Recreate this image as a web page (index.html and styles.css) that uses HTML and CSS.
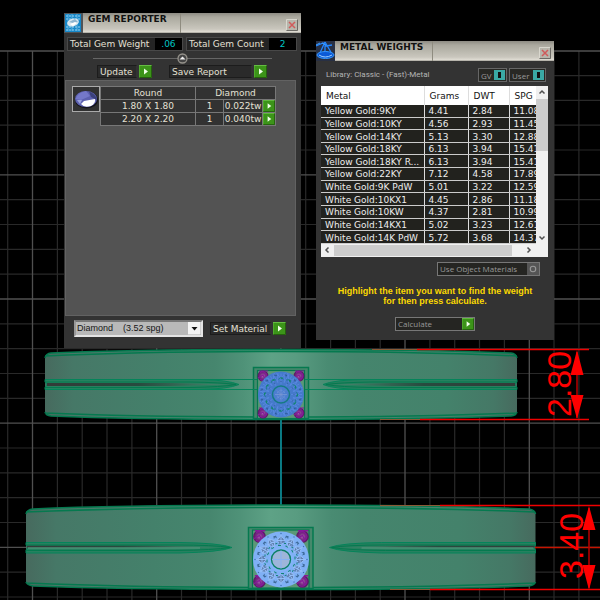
FILE: index.html
```html
<!DOCTYPE html>
<html lang="en">
<head>
<meta charset="utf-8">
<meta name="viewport" content="width=device-width, initial-scale=1">
<title>Gem Reporter and Metal Weights</title>
<link rel="stylesheet" href="styles.css">
</head>
<body>
<svg class="viewport" viewBox="0 0 600 600" preserveAspectRatio="xMinYMin slice" role="img" aria-label="Side view of two rings with dimensions">
  <defs>
    <linearGradient id="band">
      <stop offset="0" stop-color="#476a5e"/><stop offset=".06" stop-color="#467867"/><stop offset=".25" stop-color="#44816b"/>
      <stop offset=".36" stop-color="#46866e"/><stop offset=".42" stop-color="#4f9278"/><stop offset=".48" stop-color="#5ea286"/><stop offset=".53" stop-color="#599c81"/>
      <stop offset=".6" stop-color="#498b72"/><stop offset=".66" stop-color="#45856d"/><stop offset=".85" stop-color="#44826b"/><stop offset=".95" stop-color="#457866"/><stop offset="1" stop-color="#476a5e"/>
    </linearGradient>
    <linearGradient id="groove">
      <stop offset="0" stop-color="#343a38"/><stop offset=".5" stop-color="#284b3f"/><stop offset="1" stop-color="#468a70"/>
    </linearGradient>
    <radialGradient id="prong">
      <stop offset="0" stop-color="#b06ab4"/><stop offset=".45" stop-color="#7d3188"/><stop offset="1" stop-color="#551660"/>
    </radialGradient>
    <g id="groove1">
      <path d="M45 379.500H200Q228 380 239 384.500Q228 389 200 389.500H45V387.500L47 384.500L45 382Z" fill="#27805f" stroke="#05845a"/>
      <path d="M47 383H170L230 384.500L170 386H47Z" fill="url(#groove)"/>
      <path d="M45 382H190Q222 382.500 236 384.500Q222 387 190 387.500H45" fill="none" stroke="#05794f"/>
    </g>
    <g id="groove2">
      <path d="M26 542.500H180Q220 543 232 547.500Q220 552 180 553H26V550L28 547.500L26 545Z" fill="#27805f" stroke="#05845a"/>
      <path d="M27 545.500H150L220 547.500H27Z" fill="url(#groove)"/>
      <path d="M28 548H200" stroke="#5b9a82"/>
      <path d="M26 545H176Q214 545 230 547.500Q214 550 176 550.500H26" fill="none" stroke="#05794f"/>
    </g>
    <g id="facetDark">
      <path d="M0-10V-21M-3-12L-8-20M3-12L8-20M0-16L5-22M0-16L-5-22" stroke="#5b8ae4" stroke-width=".7" fill="none"/>
      <path d="M-3-15l3-2 3 2" stroke="#167b83" stroke-width=".7" fill="none"/>
      <circle cx="-5" cy="-19" r=".8" fill="#2f5795"/><circle cx="4" cy="-20" r=".7" fill="#3565a8"/><circle cx="0" cy="-13" r=".6" fill="#2f5d9d"/>
      <path d="M-1-17h3l-1 2z" fill="#11866b"/>
    </g>
    <g id="facetLight">
      <path d="M0-14l-4-5 4-5 4 5z" fill="#617fae"/>
      <path d="M0-14V-25M-4-19H4M0-24l-4 5 4 5 4-5z" stroke="#92bdf8" stroke-width="1" fill="none"/>
      <path d="M-7-23l2-1 1 3zM7-23l-2-1-1 3z" fill="#3e6b99"/>
      <path d="M-8-17l2-1 1 3zM5-14l2-2 1 2z" fill="#5a7fb0"/>
      <path d="M-3-14h3M3-16h2" stroke="#118576" stroke-width="1"/>
      <circle cx="0" cy="-26" r=".7" fill="#3d6fae"/>
    </g>
    <g id="claw">
      <circle r="5.500" fill="url(#prong)"/><path d="M-3-3A4 4 0 1 1-3 3M-5 2L0-1L2 3M-4-5H5" fill="none" stroke="#861a9a" stroke-width="1.100"/>
    </g>
  </defs>

  <rect width="600" height="600" fill="#000"/>
  <path stroke="#292929" stroke-width="1.200" fill="none" d="M0 75.600H600M0 100.400H600M0 125.200H600M0 150H600M0 199.700H600M0 224.500H600M0 249.300H600M0 274.200H600M0 323.800H600M0 348.700H600M0 373.500H600M0 398.300H600M0 448H600M0 472.800H600M0 497.600H600M0 522.500H600M0 572.100H600M0 597H600M7.700 51V600M57.400 51V600M82.200 51V600M107 51V600M131.900 51V600M181.500 51V600M206.400 51V600M231.200 51V600M256 51V600M305.700 51V600M330.600 51V600M355.400 51V600M380.200 51V600M429.900 51V600M454.700 51V600M479.500 51V600M504.400 51V600M554 51V600M578.900 51V600"/>
  <path stroke="#505050" stroke-width="1.300" fill="none" d="M0 51H600M0 174.800H600M0 299H600M0 423.200H600M0 547.300H600M32.500 51V600M156.700 51V600M280.900 51V600M405 51V600M529.300 51V600"/>
  <path d="M281 419V506" stroke="#008b97" stroke-width="1.600"/>

  <path d="M45 358Q46 353.500 51 353C110 350.500 200 349.500 281 349.500S450 350.500 511 353Q516 353.500 517 358V412Q516 415.500 511 416C450 418.500 360 419.500 281 419.500S110 418.500 51 416Q46 415.500 45 412Z" fill="url(#band)"/>
  <path d="M45 358Q46 353.500 51 353C110 350.500 200 349.500 281 349.500S450 350.500 511 353Q516 353.500 517 358M45 356C110 353 200 351.500 281 351.500S450 353 517 356M45 412Q46 415.500 51 416C110 418.500 200 419.500 281 419.500S450 418.500 511 416Q516 415.500 517 412M45 413C110 416 200 417 281 417S450 416 517 413" fill="none" stroke="#05794f" stroke-width="1.500"/>
  <path d="M200 379.500H360M200 389.500H360" stroke="#05845a"/>
  <use href="#groove1"/><use href="#groove1" transform="translate(562 0) scale(-1 1)"/>
  <rect x="253.500" y="367.500" width="55" height="51" fill="#46896c" stroke="#05794f" stroke-width="1.500"/>
  <rect x="257.500" y="370.500" width="47" height="48" fill="#5b9878" stroke="#05794f" stroke-width="1.200"/>
  <path d="M253 379.500H257M253 389.500H257M305 379.500H309M305 389.500H309" stroke="#05845a"/>
  <use href="#claw" x="263" y="376"/><use href="#claw" x="299" y="376"/><use href="#claw" x="263" y="413"/><use href="#claw" x="299" y="413"/>
  <g transform="translate(281 394.500)">
    <circle r="23" fill="#457acb"/>
    <use href="#facetDark"/><use href="#facetDark" transform="rotate(30)"/><use href="#facetDark" transform="rotate(60)"/><use href="#facetDark" transform="rotate(90)"/><use href="#facetDark" transform="rotate(120)"/><use href="#facetDark" transform="rotate(150)"/><use href="#facetDark" transform="rotate(180)"/><use href="#facetDark" transform="rotate(210)"/><use href="#facetDark" transform="rotate(240)"/><use href="#facetDark" transform="rotate(270)"/><use href="#facetDark" transform="rotate(300)"/><use href="#facetDark" transform="rotate(330)"/>
    <circle r="8.500" fill="#4c7ed0" stroke="#167b83" stroke-width="1.500"/>
    <path d="M-6 0H6M0-6V6M-4-4L4 4M4-4L-4 4" stroke="#7795d2" stroke-width=".8"/><circle r="4" fill="none" stroke="#6d9ae0" stroke-dasharray="1 1"/>
  </g>

  <path d="M26 514Q27 509.500 33 509C100 506 190 505 281 505S460 506 529 509Q535 510 535.500 514V582Q535 585 529 586C460 588.500 370 589.500 281 589.500S100 588.500 33 586Q27 585 26 582Z" fill="url(#band)"/>
  <path d="M26 514Q27 509.500 33 509C100 506 190 505 281 505S460 506 529 509Q535 510 535.500 514M26 512C100 509 190 507.500 281 507.500S460 509 535 512M26 582Q27 585 33 586C100 588.500 190 589.500 281 589.500S460 588.500 529 586Q535 585 535.500 582M26 583C100 586 190 587.500 281 587.500S460 586 535 583" fill="none" stroke="#05794f" stroke-width="1.500"/>
  <use href="#groove2"/><use href="#groove2" transform="translate(561.500 0) scale(-1 1)"/>
  <rect x="248.500" y="527.500" width="64.500" height="61" fill="#46896c" stroke="#05794f" stroke-width="1.500"/>
  <rect x="252.500" y="530" width="56.500" height="58" fill="#5b9878" stroke="#05794f" stroke-width="1.200"/>
  <use href="#claw" transform="translate(259.500 536.500) scale(1.150)"/><use href="#claw" transform="translate(302.500 536.500) scale(1.150)"/><use href="#claw" transform="translate(259.500 581.500) scale(1.150)"/><use href="#claw" transform="translate(302.500 581.500) scale(1.150)"/>
  <g transform="translate(281 559.500)">
    <circle r="28" fill="#7fb0f5"/>
    <use href="#facetLight"/><use href="#facetLight" transform="rotate(30)"/><use href="#facetLight" transform="rotate(60)"/><use href="#facetLight" transform="rotate(90)"/><use href="#facetLight" transform="rotate(120)"/><use href="#facetLight" transform="rotate(150)"/><use href="#facetLight" transform="rotate(180)"/><use href="#facetLight" transform="rotate(210)"/><use href="#facetLight" transform="rotate(240)"/><use href="#facetLight" transform="rotate(270)"/><use href="#facetLight" transform="rotate(300)"/><use href="#facetLight" transform="rotate(330)"/>
    <circle r="12" fill="#83b4f8"/>
    <circle r="9.500" fill="#9eb5da" stroke="#0d8066" stroke-width="1.400"/>
    <path d="M-9 0H9M0-9V9" stroke="#87b1f2"/>
  </g>

  <g fill="none">
    <path d="M372 349.500H417M380 419.500H420M380 505.500H440M390 589.500H430" stroke="#8a5a35"/>
    <path d="M417 349.500H589M420 419.500H589M440 505.500H600M430 589.500H600" stroke="#f00000" stroke-width="1.500"/>
    <path d="M535 547.500H600" stroke="#c81400" stroke-width="1.500"/>
    <path d="M577 352V418M589 508V588" stroke="#b80000" stroke-width="1.500"/>
  </g>
  <path fill="#f00" d="M577 350L583.500 375H570.500ZM577 419L583.500 395H570.500ZM589 506L595.500 530H582.500ZM589 590L595.500 565H582.500Z"/>
  <g class="dimension">
    <text transform="translate(571 417) rotate(-90)">2.80</text>
    <text transform="translate(583 579) rotate(-90)">3.40</text>
  </g>

  <symbol id="play" viewBox="0 0 13 13">
    <path d="M0 0H13V13H0Z" fill="#3c9419"/><path d="M0 12.500V.5H13" fill="none" stroke="#65bd43"/><path d="M.5 12.500H12.500V.5" fill="none" stroke="#25600f"/><path d="M5 3.500L9 6.500L5 9.500Z" fill="#f0ffe8"/>
  </symbol>
  <symbol id="close" viewBox="0 0 12 12">
    <path d="M0 0H12V12H0Z" fill="#b7b5ab"/><path d="M.5 11.500V.5H11.500" fill="none" stroke="#d9d7ce"/><path d="M.5 11.500H11.500V.5" fill="none" stroke="#6c6a65"/><path d="M3 3L9 9M9 3L3 9" stroke="#d05a5a" stroke-width="1.500"/>
  </symbol>
</svg>

<main class="desktop">
  <section class="window gem-window" aria-label="Gem Reporter">
    <header class="titlebar">
      <svg class="app-icon" viewBox="0 0 19 20" aria-hidden="true">
        <rect width="19" height="20" fill="#505458"/><rect x="1" y="1" width="16" height="18" fill="#1687c8"/>
        <path d="M2 3H16M2 6H16M2 14H16M2 17H16" stroke="#9ad4f1" stroke-dasharray="2 1"/><path d="M4 1V18M8 1V18M13 1V18" stroke="#78c2e8" stroke-width=".7"/>
        <ellipse cx="9" cy="9.500" rx="6" ry="3.800" transform="rotate(-15 9 9.500)" fill="#d6e5ee"/><path d="M5 9L11 6L14 9L9 10Z" fill="#8eb5d0"/><path d="M6 11L11 9L13 10L9 13Z" fill="#fff"/>
      </svg>
      <h1>GEM REPORTER</h1>
      <button class="close" aria-label="Close"><svg><use href="#close"/></svg></button>
    </header>
    <div class="stats">
      <div class="stat weight"><label for="gem-weight">Total Gem Weight</label><output id="gem-weight">.06</output></div>
      <div class="stat count"><label for="gem-count">Total Gem Count</label><output id="gem-count">2</output></div>
    </div>
    <div class="divider">
      <button class="collapse" aria-label="Collapse"><svg viewBox="0 0 11 11"><circle cx="5.500" cy="5.500" r="4.500" fill="#444" stroke="#96938c" stroke-width="1.300"/><path d="M2.500 6.500L5.500 3.500L8.500 6.500Z" fill="#eee"/></svg></button>
    </div>
    <div class="actions">
      <button class="action update"><span>Update</span><svg><use href="#play"/></svg></button>
      <button class="action save"><span>Save Report</span><svg><use href="#play"/></svg></button>
    </div>
    <div class="report">
      <svg class="gem-picture" viewBox="0 0 28 26" role="img" aria-label="Round gem">
        <rect x=".5" y=".5" width="27" height="25" fill="#313131" stroke="#aaa"/>
        <ellipse cx="14.500" cy="14" rx="11.500" ry="8.500" fill="#15151c"/><ellipse cx="14" cy="13" rx="11" ry="8" fill="#5d61b0"/>
        <path d="M3.500 13Q6 6 14 5L18 10L9 14Z" fill="#7478c9"/><path d="M17 5.500Q24 8 25 14L19 11Z" fill="#3b407c"/>
        <path d="M9 18L12 15L23 13Q24 17 19 20Q12 22 9 18Z" fill="#fff"/><path d="M5 14L10 14L8 18Z" fill="#9aa1dc"/>
      </svg>
      <table class="gems">
        <colgroup><col class="g-size"><col class="g-qty"><col class="g-weight"><col class="g-go"></colgroup>
        <thead><tr><th>Round</th><th colspan="3">Diamond</th></tr></thead>
        <tbody>
          <tr><td>1.80 X 1.80</td><td>1</td><td>0.022tw</td><td class="go"><button aria-label="Show 1.80 gems"><svg><use href="#play"/></svg></button></td></tr>
          <tr><td>2.20 X 2.20</td><td>1</td><td>0.040tw</td><td class="go"><button aria-label="Show 2.20 gems"><svg><use href="#play"/></svg></button></td></tr>
        </tbody>
      </table>
    </div>
    <footer class="material">
      <div class="picker">
        <select aria-label="Material"><option>Diamond &nbsp;&nbsp; (3.52 spg)</option></select>
        <svg class="picker-arrow" viewBox="0 0 13 13" aria-hidden="true"><rect width="13" height="13" fill="#f4f4f4"/><path d="M13 0V13H0" fill="none" stroke="#aaa"/><path d="M3.500 5H9.500L6.500 8.500Z" fill="#111"/></svg>
      </div>
      <button class="action set"><span>Set Material</span><svg><use href="#play"/></svg></button>
    </footer>
  </section>

  <section class="window metal-window" aria-label="Metal Weights">
    <header class="titlebar">
      <svg class="app-icon" viewBox="0 0 19 20" aria-hidden="true">
        <rect width="19" height="20" fill="#283044"/><path d="M0 5L7 2L10 5L16 4M9 1L3 14M9 1L16 13M9 5V13" fill="none" stroke="#2386ff" stroke-width="1.300"/>
        <ellipse cx="9.500" cy="14" rx="8.500" ry="3.500" fill="#0b5ad7" stroke="#3598ff"/><path d="M3 14Q9 18 16 14" fill="none" stroke="#9dceff"/><path d="M0 4L4 2M6 2L10 4" stroke="#3f9cff"/>
      </svg>
      <h1>METAL WEIGHTS</h1>
      <button class="close" aria-label="Close"><svg><use href="#close"/></svg></button>
    </header>
    <div class="library">
      <p>Library: Classic - (Fast)-Metal</p>
      <button class="toggle gv" aria-pressed="true"><span>GV</span><i></i></button>
      <button class="toggle user" aria-pressed="true"><span>User</span><i></i></button>
    </div>
    <div class="metals">
      <div class="metals-view">
        <table>
          <colgroup><col class="m-name"><col class="m-grams"><col class="m-dwt"><col class="m-spg"></colgroup>
          <thead><tr><th>Metal</th><th>Grams</th><th>DWT</th><th>SPG</th></tr></thead>
          <tbody>
            <tr><td>Yellow Gold:9KY</td><td>4.41</td><td>2.84</td><td>11.08</td></tr>
            <tr><td>Yellow Gold:10KY</td><td>4.56</td><td>2.93</td><td>11.45</td></tr>
            <tr><td>Yellow Gold:14KY</td><td>5.13</td><td>3.30</td><td>12.88</td></tr>
            <tr><td>Yellow Gold:18KY</td><td>6.13</td><td>3.94</td><td>15.41</td></tr>
            <tr><td>Yellow Gold:18KY R...</td><td>6.13</td><td>3.94</td><td>15.41</td></tr>
            <tr><td>Yellow Gold:22KY</td><td>7.12</td><td>4.58</td><td>17.89</td></tr>
            <tr><td>White Gold:9K PdW</td><td>5.01</td><td>3.22</td><td>12.59</td></tr>
            <tr><td>White Gold:10KX1</td><td>4.45</td><td>2.86</td><td>11.18</td></tr>
            <tr><td>White Gold:10KW</td><td>4.37</td><td>2.81</td><td>10.99</td></tr>
            <tr><td>White Gold:14KX1</td><td>5.02</td><td>3.23</td><td>12.61</td></tr>
            <tr><td>White Gold:14K PdW</td><td>5.72</td><td>3.68</td><td>14.37</td></tr>
          </tbody>
        </table>
      </div>
      <div class="vscroll">
        <svg viewBox="0 0 12 12"><path d="M3.500 7.500L6 5L8.500 7.500"/></svg><div class="thumb"></div><svg class="end" viewBox="0 0 12 12"><path d="M3.500 4.500L6 7L8.500 4.500"/></svg>
      </div>
      <div class="hscroll">
        <svg viewBox="0 0 12 12"><path d="M7.500 3.500L5 6L7.500 8.500"/></svg><div class="thumb"></div><svg class="end" viewBox="0 0 12 12"><path d="M4.500 3.500L7 6L4.500 8.500"/></svg>
      </div>
    </div>
    <div class="calculate">
      <button class="framed object"><span>Use Object Materials</span><svg viewBox="0 0 11 11"><rect width="11" height="11" fill="#555"/><circle cx="5.500" cy="5.500" r="2.500" fill="none" stroke="#999"/></svg></button>
      <p>Highlight the item you want to find the weight<br>for then press calculate.</p>
      <button class="framed run"><span>Calculate</span><svg><use href="#play"/></svg></button>
    </div>
  </section>
</main>
</body>
</html>
```
FILE: styles.css
```css
* { box-sizing: border-box; }

body {
  margin: 0;
  min-height: 100vh;
  background: #000;
  overflow: hidden;
  font-family: "DejaVu Sans", sans-serif;
  font-size: 9px;
  line-height: 12px;
  color: #e4e0d4;
}

svg { display: block; }
h1, p { margin: 0; }
button {
  display: block;
  margin: 0;
  padding: 0;
  border: 0;
  background: none;
  color: inherit;
  font: inherit;
  text-align: left;
}
table { border-collapse: collapse; table-layout: fixed; }
th, td { padding: 0; font-weight: normal; }

.viewport { position: fixed; inset: 0; width: 100%; height: 100%; }
.dimension text {
  font-family: "Liberation Sans", sans-serif;
  font-size: 34px;
  fill: #f00;
}

/* Floating tool windows */
.window { position: absolute; background: #333; }
.gem-window { left: 64px; top: 13px; width: 237px; }
.metal-window { left: 316px; top: 41px; width: 238px; }

.titlebar {
  display: flex;
  height: 20px;
  padding-right: 3px;
  background: linear-gradient(#8d8b83, #aaa89e 20%, #c9c6bd 80%, #e0ddd4 95%, #8d8b83);
}
.app-icon { flex: none; width: 19px; height: 20px; }
.titlebar h1 {
  width: 98px;
  padding-left: 5px;
  border-right: 1px solid #8f8c80;
  color: #111;
  font-size: 9px;
  line-height: 12px;
  white-space: nowrap;
}
.close { margin: 4px 0 0 auto; }
.close svg { width: 12px; height: 12px; }

/* Totals */
.stats { display: flex; gap: 3px; padding: 4px 4px 0 3px; }
.stat { display: flex; height: 14px; border: 1px solid #484848; background: #242424; }
.stat label { flex: 1; padding-left: 2px; white-space: nowrap; }
.stat output { width: 27px; background: #000; color: #00c5c5; text-align: center; }
.weight { flex: 116; }
.count { flex: 111; }

.divider {
  display: flex;
  justify-content: center;
  height: 14px;
  margin: 0 29px;
  background: linear-gradient(#666, #666) 0 7px / 100% 1px no-repeat;
}
.collapse { align-self: flex-start; }
.collapse svg { width: 11px; height: 11px; margin-top: 2px; }

.actions { display: flex; gap: 17px; padding-left: 33px; }
.action { display: flex; gap: 2px; }
.action span {
  height: 13px;
  padding-left: 2px;
  border: 1px solid #1c1c1c;
  border-right-color: #333;
  background: #2a2a2a;
  line-height: 12px;
  white-space: nowrap;
}
.action svg { width: 13px; height: 13px; }
.update span { width: 40px; }
.save span { width: 83px; }
.set span { width: 61px; }

.report {
  display: flex;
  align-items: flex-start;
  height: 236px;
  margin: 2px 5px 0 1px;
  padding: 5px 0 0 6px;
  border: 1px solid #626262;
  background: #535353;
}
.gem-picture { width: 28px; height: 26px; }
.gems { width: 175px; background: #323232; text-align: center; }
.gems th, .gems td { height: 13px; border: 1px solid #777; line-height: 12px; }
.go svg { width: 12px; height: 12px; }
.g-size { width: 95px; }
.g-qty { width: 28px; }
.g-weight { width: 39px; }
.g-go { width: 13px; }

.material { display: flex; gap: 7px; padding: 4px 10px 11px; align-items: center; }
.picker { position: relative; width: 129px; }
.picker select {
  display: block;
  width: 100%;
  height: 17px;
  padding: 0 15px 0 1px;
  appearance: none;
  border: 2px solid #e4e4e4;
  border-top-color: #777;
  border-left-color: #999;
  border-radius: 0;
  background: #b9b9b9;
  color: #151515;
  font: 9px/13px "Liberation Sans", sans-serif;
}
.picker-arrow { position: absolute; top: 2px; right: 2px; width: 13px; height: 13px; pointer-events: none; }

/* Metal weights */
.library { display: flex; gap: 2px; padding: 7px 8px 4px 10px; align-items: center; }
.library p {
  flex: 1;
  color: #b5b5b5;
  font-family: Roboto, sans-serif;
  font-size: 8px;
}
.toggle {
  display: flex;
  justify-content: space-between;
  height: 14px;
  padding: 1px;
  border: 1px solid #666;
  background: #282824;
  color: #999;
  font-family: "Open Sans", sans-serif;
  font-size: 8px;
}
.toggle span { padding: 0 0 0 1px; line-height: 11px; }
.toggle i { width: 11px; background: linear-gradient(#111, #111) center / 3px 6px no-repeat #3aa9a5; }
.gv { width: 29px; }
.user { width: 37px; }

.metals {
  display: grid;
  grid-template-columns: 1fr 12px;
  margin: 0 6px 0 5px;
  background: #f0f0f0;
}
.metals-view { overflow: hidden; }
.metals table { width: 230px; height: 158px; background: #22221e; color: #eee; line-height: 10px; }
.metals th { height: 19px; padding-left: 5px; border-right: 1px solid #ddd; background: #fff; color: #111; text-align: left; }
.metals td { padding: 1px 0 0 4px; border-right: 1px solid #ddd; border-bottom: 1px solid #ccc; white-space: nowrap; }
.m-name { width: 103px; }
.m-grams { width: 44px; }
.m-dwt { width: 41px; }
.m-spg { width: 42px; }

.vscroll { display: flex; flex-direction: column; }
.hscroll { display: flex; grid-column: 1 / -1; height: 13px; }
.vscroll svg, .hscroll svg { width: 12px; height: 12px; fill: none; stroke: #505050; stroke-width: 1.5; }
.thumb { background: #cdcdcd; }
.vscroll .thumb { height: 52px; margin-top: 1px; }
.hscroll .thumb { flex: 1; margin: 1px 11px 1px 1px; }
.vscroll .end { margin-top: auto; }
.hscroll .end { margin-right: 13px; }

.calculate { display: flex; flex-direction: column; align-items: center; padding: 5px 14px 9px; }
.calculate p {
  padding: 10px 0 11px;
  color: #fcd900;
  font: bold 9px/10px "Liberation Sans", sans-serif;
  text-align: center;
  white-space: nowrap;
}
.framed {
  display: flex;
  justify-content: space-between;
  height: 14px;
  border: 1px solid #777;
  background: #252522;
  color: #999;
  font-family: "Open Sans", sans-serif;
  font-size: 8px;
}
.framed span { padding-left: 2px; line-height: 12px; white-space: nowrap; }
.framed svg { width: 12px; height: 12px; }
.object { align-self: flex-end; width: 103px; }
.run { width: 80px; }
```
